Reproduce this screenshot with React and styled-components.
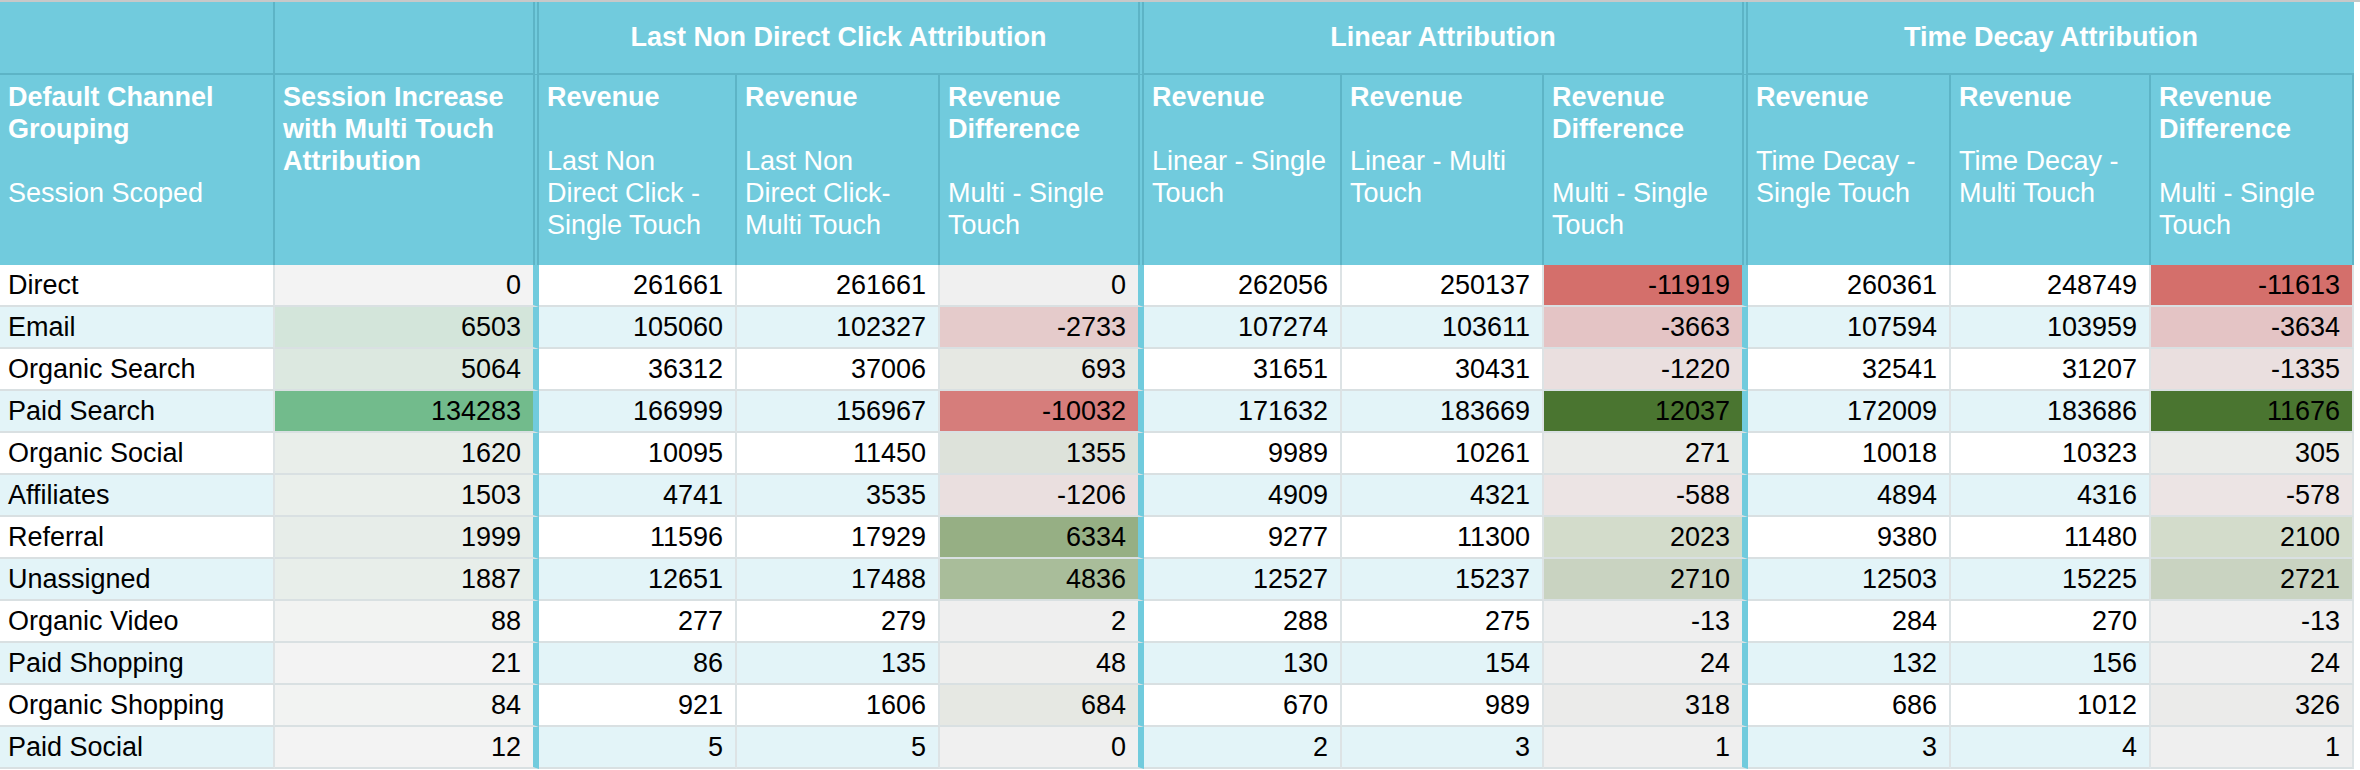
import React from "react";
import styled, { createGlobalStyle } from "styled-components";

const Global = createGlobalStyle`
  html, body { margin: 0; padding: 0; background: #fff; }
  body { font-family: "Liberation Sans Narrow", "Arial Narrow", "Liberation Sans", Arial, sans-serif; }
`;

const TEAL = "#71cbdd";
const COLS = "275px 264px 198px 203px 204px 198px 202px 204px 203px 200px 203px";

const Sheet = styled.div`
  border-top: 2px solid #c8c8c8;
  width: 2360px;
  display: grid;
  grid-template-columns: ${COLS};
  grid-auto-rows: 42px;
  grid-template-rows: 73px 190px;
  overflow: hidden;
  height: 768px;
`;

const GroupCell = styled.div`
  grid-column: span ${(p) => p.span || 1};
  background: ${TEAL};
  color: #fff;
  font-weight: bold;
  font-size: 27px;
  display: flex;
  align-items: center;
  justify-content: center;
  border-bottom: 2px solid #5db4c6;
  border-right: ${(p) => (p.thick ? `6px double #5db4c6` : "none")};
`;

const HeadCell = styled.div`
  background: ${TEAL};
  color: #fff;
  font-size: 27px;
  line-height: 32px;
  padding: 6px 8px;
  box-sizing: border-box;
  border-right: ${(p) => (p.thick ? `6px double #5db4c6` : "2px solid #5db4c6")};
  b { font-weight: bold; display: block; }
  span { display: block; margin-top: 32px; }
`;

const Cell = styled.div`
  background: ${(p) => p.bg};
  color: #000;
  font-size: 27px;
  line-height: 40px;
  text-align: ${(p) => (p.left ? "left" : "right")};
  padding: 0 ${(p) => (p.left ? "0 0 8px" : "12px 0 0")};
  box-sizing: border-box;
  border-bottom: 2px solid #d9e0e2;
  border-right: ${(p) => (p.thick ? `6px solid ${TEAL}` : "2px solid #dde3e5")};
  white-space: nowrap;
  overflow: hidden;
`;

const rows = [
  ["Direct", 0, 261661, 261661, 0, 262056, 250137, -11919, 260361, 248749, -11613],
  ["Email", 6503, 105060, 102327, -2733, 107274, 103611, -3663, 107594, 103959, -3634],
  ["Organic Search", 5064, 36312, 37006, 693, 31651, 30431, -1220, 32541, 31207, -1335],
  ["Paid Search", 134283, 166999, 156967, -10032, 171632, 183669, 12037, 172009, 183686, 11676],
  ["Organic Social", 1620, 10095, 11450, 1355, 9989, 10261, 271, 10018, 10323, 305],
  ["Affiliates", 1503, 4741, 3535, -1206, 4909, 4321, -588, 4894, 4316, -578],
  ["Referral", 1999, 11596, 17929, 6334, 9277, 11300, 2023, 9380, 11480, 2100],
  ["Unassigned", 1887, 12651, 17488, 4836, 12527, 15237, 2710, 12503, 15225, 2721],
  ["Organic Video", 88, 277, 279, 2, 288, 275, -13, 284, 270, -13],
  ["Paid Shopping", 21, 86, 135, 48, 130, 154, 24, 132, 156, 24],
  ["Organic Shopping", 84, 921, 1606, 684, 670, 989, 318, 686, 1012, 326],
  ["Paid Social", 12, 5, 5, 0, 2, 3, 1, 3, 4, 1],
];

const colorCols = {
  1: ["#f3f3f3", "#d3e5da", "#dce8e0", "#72bb8c", "#e9eeea", "#eaefeb", "#e7ede9", "#e8eeea", "#f2f3f2", "#f3f3f3", "#f2f3f2", "#f3f3f3"],
  4: ["#f0f0f0", "#e5cbcb", "#e6e8e3", "#d67d7b", "#dde2da", "#eadfdf", "#96af84", "#a9bd9a", "#efefef", "#eeeeed", "#e6e8e3", "#f0f0f0"],
  7: ["#d46f6b", "#e4c4c5", "#eadfdf", "#4a7530", "#eaebe8", "#ece4e4", "#d3dccb", "#c9d3c1", "#efefef", "#eeeeee", "#ebebea", "#efefef"],
};
colorCols[10] = colorCols[7];

const thickCols = new Set([1, 4, 7]);

const headers = [
  ["Default Channel Grouping", "Session Scoped"],
  ["Session Increase with Multi Touch Attribution", ""],
  ["Revenue", "Last Non Direct Click - Single Touch"],
  ["Revenue", "Last Non Direct Click- Multi Touch"],
  ["Revenue Difference", "Multi - Single Touch"],
  ["Revenue", "Linear - Single Touch"],
  ["Revenue", "Linear - Multi Touch"],
  ["Revenue Difference", "Multi - Single Touch"],
  ["Revenue", "Time Decay - Single Touch"],
  ["Revenue", "Time Decay - Multi Touch"],
  ["Revenue Difference", "Multi - Single Touch"],
];

export default function App() {
  return (
    <>
      <Global />
      <Sheet>
        <GroupCell style={{ borderRight: "2px solid #5db4c6" }} />
        <GroupCell thick />
        <GroupCell span={3} thick>Last Non Direct Click Attribution</GroupCell>
        <GroupCell span={3} thick>Linear Attribution</GroupCell>
        <GroupCell span={3}>Time Decay Attribution</GroupCell>
        {headers.map(([t, s], i) => (
          <HeadCell key={i} thick={thickCols.has(i)}>
            <b>{t}</b>
            {s && <span>{s}</span>}
          </HeadCell>
        ))}
        {rows.map((r, ri) =>
          r.map((v, ci) => {
            const base = ri % 2 ? "#e3f4f8" : "#ffffff";
            const bg = colorCols[ci] ? colorCols[ci][ri] : base;
            return (
              <Cell key={ri + "-" + ci} bg={bg} left={ci === 0} thick={thickCols.has(ci) || ci === 0 && false}>
                {v}
              </Cell>
            );
          })
        )}
      </Sheet>
    </>
  );
}
